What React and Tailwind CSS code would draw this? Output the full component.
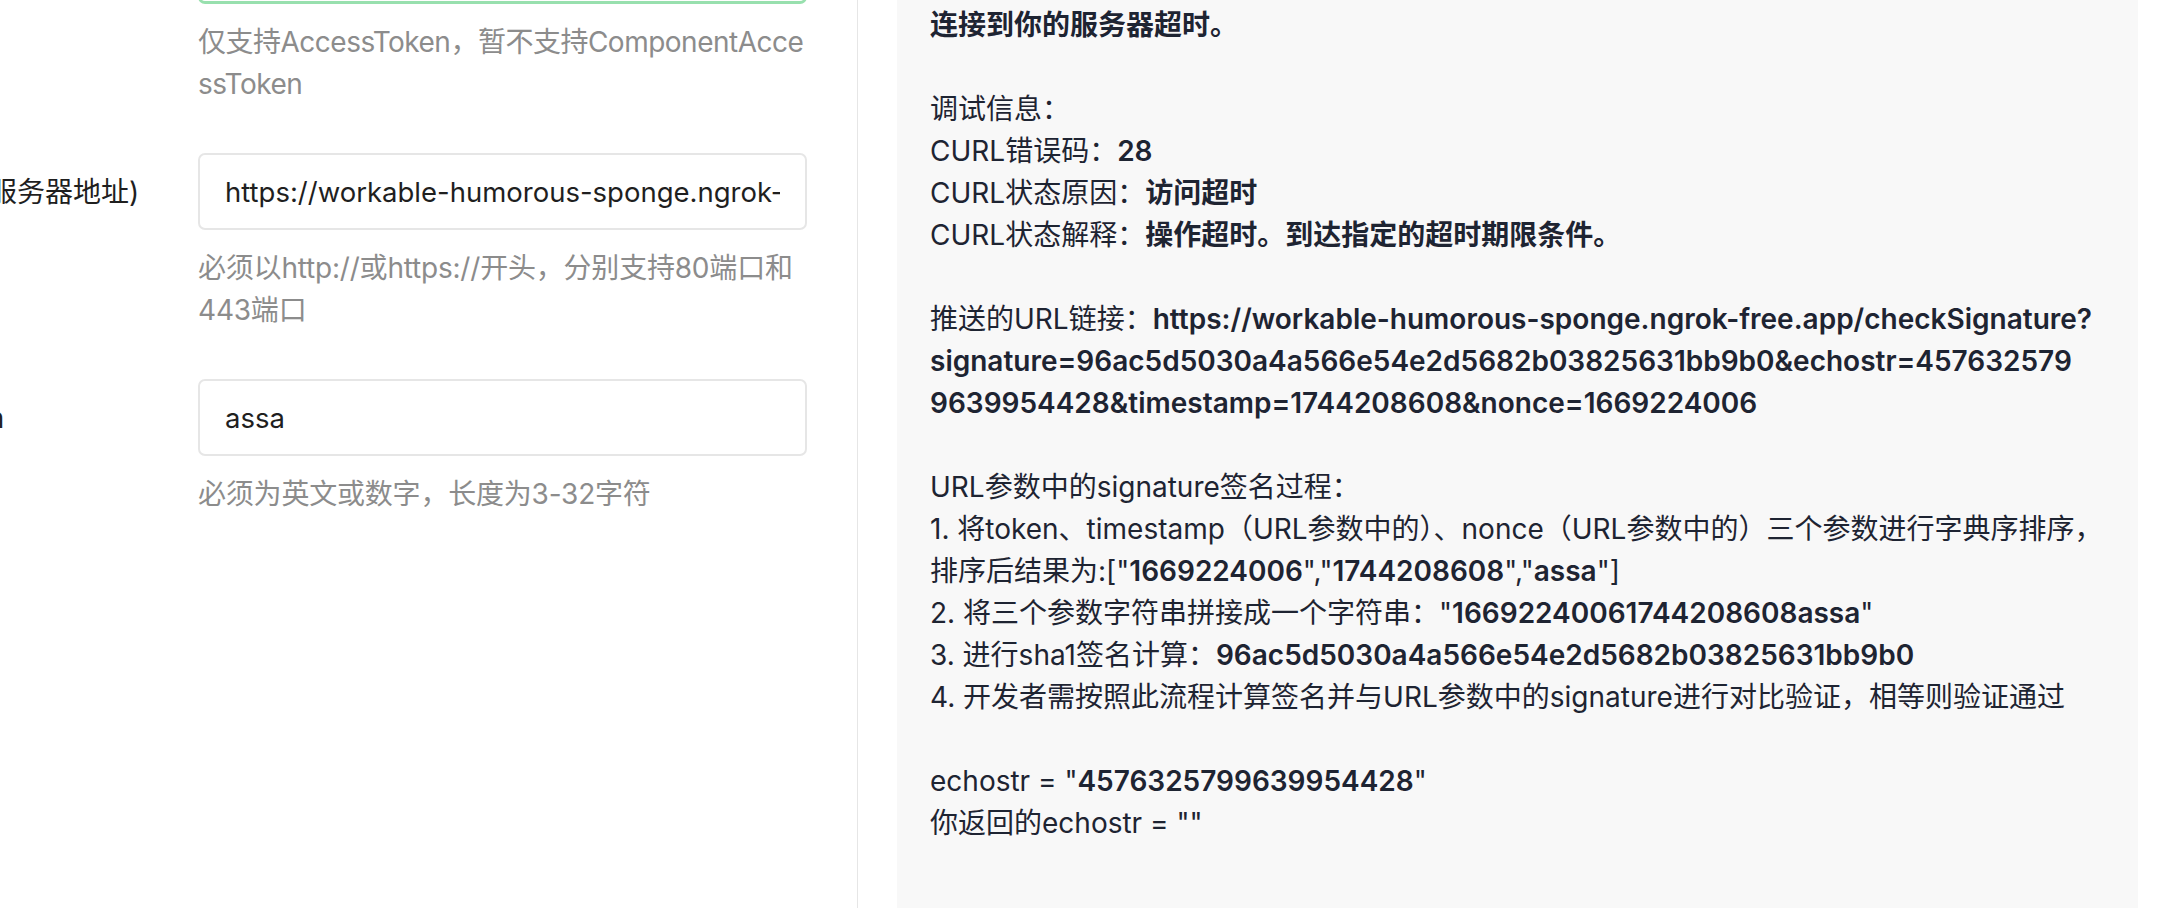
import React from 'react';

const FONT = "font-['Inter','Noto_Sans_CJK_SC',sans-serif]";

const FormRow = ({ label, value, help, green, first, tight }) => {
    return (
        <div className={`flex ${first ? 'mt-[-73px]' : ''} mb-[48px]`}>
            <div className="w-[274px] shrink-0 h-[77px] flex items-center text-[#1f1f1f] whitespace-nowrap">
                {label}
            </div>
            <div className="w-[609px] shrink-0">
                <div
                    className={`h-[77px] rounded-[7px] bg-white flex items-center px-[25px] overflow-hidden whitespace-nowrap text-[27.5px] text-[#1f1f1f] ${
                        green ? 'border-[3px] border-[#98e0ae]' : 'border-2 border-[#e6e6e6]'
                    }`}
                >
                    <span className="overflow-hidden">{value}</span>
                </div>
                <div
                    className={`mt-[17px] text-[#8c8c8c] whitespace-nowrap ${
                        tight ? 'tracking-[-0.5px]' : 'tracking-[-0.2px]'
                    }`}
                >
                    {help}
                </div>
            </div>
        </div>
    );
};

const B = ({ children }) => <span className="font-semibold">{children}</span>;

const App = () => {
    return (
        <div className={`${FONT} text-[28px] leading-[42px] flex h-[908px] w-[2174px] overflow-hidden bg-white`}>
            {/* form column */}
            <div className="w-[857px] shrink-0 overflow-hidden">
                <div className="ml-[-76px]">
                    <FormRow
                        first
                        green
                        tight
                        label="AccessToken"
                        value=""
                        help={
                            <>
                                仅支持AccessToken，暂不支持ComponentAcce
                                <br />
                                ssToken
                            </>
                        }
                    />
                    <FormRow
                        label="URL(服务器地址)"
                        value="https://workable-humorous-sponge.ngrok-free.app/checkSignature"
                        help={
                            <>
                                必须以http://或https://开头，分别支持80端口和
                                <br />
                                443端口
                            </>
                        }
                    />
                    <FormRow label="Token" value="assa" help="必须为英文或数字，长度为3-32字符" />
                </div>
            </div>

            <div className="w-px shrink-0 bg-[#e6e6e6]" />
            <div className="w-[39px] shrink-0" />

            {/* debug result */}
            <div className="w-[1241px] shrink-0 bg-[#f8f8f8] px-[33px] pt-[4px] text-[#1e2432] whitespace-nowrap">
                <div><span className="font-bold">连接到你的服务器超时。</span></div>
                <div>&nbsp;</div>
                <div>调试信息：</div>
                <div>CURL错误码：<B>28</B></div>
                <div>CURL状态原因：<B>访问超时</B></div>
                <div>CURL状态解释：<B>操作超时。到达指定的超时期限条件。</B></div>
                <div>&nbsp;</div>
                <div>推送的URL链接：<B>https://workable-humorous-sponge.ngrok-free.app/checkSignature?</B></div>
                <div><B>signature=96ac5d5030a4a566e54e2d5682b03825631bb9b0&amp;echostr=457632579</B></div>
                <div><B>9639954428&amp;timestamp=1744208608&amp;nonce=1669224006</B></div>
                <div>&nbsp;</div>
                <div>URL参数中的signature签名过程：</div>
                <div>1. 将token、timestamp（URL参数中的）、nonce（URL参数中的）三个参数进行字典序排序，</div>
                <div>排序后结果为:["<B>1669224006</B>","<B>1744208608</B>","<B>assa</B>"]</div>
                <div>2. 将三个参数字符串拼接成一个字符串："<B>16692240061744208608assa</B>"</div>
                <div>3. 进行sha1签名计算：<B>96ac5d5030a4a566e54e2d5682b03825631bb9b0</B></div>
                <div>4. 开发者需按照此流程计算签名并与URL参数中的signature进行对比验证，相等则验证通过</div>
                <div>&nbsp;</div>
                <div>echostr = "<B>4576325799639954428</B>"</div>
                <div>你返回的echostr = ""</div>
            </div>
        </div>
    );
};

export default App;
